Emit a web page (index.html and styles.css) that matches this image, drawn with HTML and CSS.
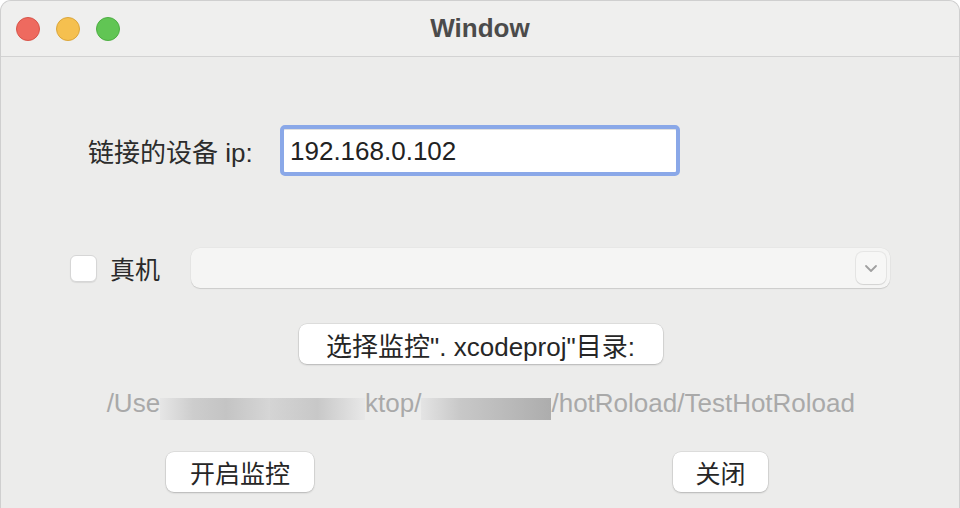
FILE: index.html
```html
<!DOCTYPE html>
<html lang="zh">
<head>
<meta charset="utf-8">
<title>Window</title>
<link rel="stylesheet" href="styles.css">
</head>
<body>
<div class="window">
  <div class="titlebar">
    <div class="lights">
      <span class="light red"></span>
      <span class="light yellow"></span>
      <span class="light green"></span>
    </div>
    <div class="title">Window</div>
  </div>
  <div class="content">
    <div class="row ip-row">
      <label class="label">链接的设备 ip:</label>
      <div class="field"><span class="field-text">192.168.0.102</span></div>
    </div>
    <div class="row device-row">
      <span class="checkbox"></span>
      <span class="check-label">真机</span>
      <div class="popup">
        <span class="popup-btn">
          <svg width="14" height="9" viewBox="0 0 14 9"><path d="M2 2 L7 7 L12 2" fill="none" stroke="#a0a0a0" stroke-width="1.8" stroke-linecap="round" stroke-linejoin="round"/></svg>
        </span>
      </div>
    </div>
    <div class="row center-row">
      <button class="btn choose">选择监控". xcodeproj"目录:</button>
    </div>
    <div class="row path-row">
      <span class="path">/Use<span class="blur b1"></span><span class="blur b2"></span>ktop/<span class="blur b3"></span>/hotRoload/TestHotRoload</span>
    </div>
    <div class="row bottom-row">
      <button class="btn start">开启监控</button>
      <button class="btn close">关闭</button>
    </div>
  </div>
</div>
</body>
</html>
```

FILE: styles.css
```css
* { box-sizing: border-box; }
html, body { margin: 0; padding: 0; background: #ffffff; }
body {
  width: 960px;
  height: 508px;
  overflow: hidden;
  font-family: "Liberation Sans", "Noto Sans CJK SC", sans-serif;
  color: #2a2a2a;
}
.window {
  width: 960px;
  height: 508px;
  background: #ececeb;
  border-radius: 11px 11px 0 0;
  border: 1px solid #cfcfcf;
  border-bottom: none;
  overflow: hidden;
  display: flex;
  flex-direction: column;
}
.titlebar {
  height: 56px;
  flex: none;
  background: #efefee;
  border-bottom: 1px solid #d3d3d3;
  display: flex;
  align-items: center;
  position: relative;
}
.lights {
  display: flex;
  gap: 16px;
  padding-left: 15px;
}
.light {
  width: 24px;
  height: 24px;
  border-radius: 50%;
  display: block;
}
.red { background: #ee6a5f; border: 1px solid #d85449; }
.yellow { background: #f5c04f; border: 1px solid #dba63a; }
.green { background: #61c554; border: 1px solid #4dae42; }
.title {
  position: absolute;
  left: 0;
  right: 0;
  top: 0;
  height: 55px;
  line-height: 55px;
  text-align: center;
  font-weight: bold;
  font-size: 26px;
  color: #4b4b4b;
}
.content {
  display: flex;
  flex-direction: column;
}
.row { display: flex; align-items: center; }
.ip-row {
  margin-top: 68px;
  height: 51px;
  padding-left: 87px;
}
.label {
  font-size: 26px;
  color: #2c2c2c;
  width: 192px;
  white-space: nowrap;
}
.field {
  width: 400px;
  height: 51px;
  border: 4px solid #8aa8e8;
  border-radius: 5px;
  background: #fff;
  display: flex;
  align-items: center;
  padding-left: 6px;
  box-shadow: inset 0 1px 0 #e0e0e0;
}
.field-text { font-size: 26px; color: #222; padding-top: 1px; }
.device-row {
  margin-top: 72px;
  height: 40px;
  padding-left: 69px;
}
.checkbox {
  width: 27px;
  height: 27px;
  border-radius: 6px;
  background: #fff;
  border: 1px solid #d6d6d6;
  box-shadow: 0 1px 1px rgba(0,0,0,0.08);
  display: block;
}
.check-label {
  font-size: 25px;
  margin-left: 13px;
  width: 81px;
  color: #2a2a2a;
}
.popup {
  width: 699px;
  height: 40px;
  background: #f5f5f4;
  border-radius: 9px;
  box-shadow: 0 1px 1px rgba(0,0,0,0.12), 0 0 0 0.5px rgba(0,0,0,0.04);
  display: flex;
  justify-content: flex-end;
  align-items: center;
  padding-right: 4px;
}
.popup-btn {
  width: 30px;
  height: 32px;
  border-radius: 7px;
  background: #f7f7f6;
  box-shadow: 0 0 0 1px rgba(0,0,0,0.06), 0 1px 1px rgba(0,0,0,0.08);
  display: flex;
  align-items: center;
  justify-content: center;
}
.btn {
  font-family: "Liberation Sans", "Noto Sans CJK SC", sans-serif;
  font-size: 25px;
  color: #262626;
  background: #fff;
  border: none;
  border-radius: 8px;
  height: 40px;
  padding: 0;
  white-space: nowrap;
  box-shadow: 0 0 0 0.5px rgba(0,0,0,0.12), 0 1px 2px rgba(0,0,0,0.18);
}
.center-row {
  margin-top: 36px;
  justify-content: center;
  padding-left: 1px;
}
.choose { width: 364px; font-size: 26px; }
.path-row {
  margin-top: 20px;
  height: 38px;
  justify-content: flex-end;
  padding-right: 104px;
}
.path {
  font-size: 26px;
  color: #a9a9a9;
  white-space: nowrap;
  display: flex;
  align-items: center;
}
.blur {
  display: inline-block;
  height: 22px;
  margin-top: 12px;
}
.b1 { width: 110px; background: linear-gradient(90deg, #e6e6e6, #cdcdcd 30%, #c4c4c4 60%, #d6d6d6); }
.b2 { width: 95px; background: linear-gradient(90deg, #d4d4d4, #c8c8c8 50%, #e8e8e8); }
.b3 { width: 130px; background: linear-gradient(90deg, #e4e4e4, #c8c8c8 30%, #adadad); }
.bottom-row {
  margin-top: 30px;
  padding-left: 165px;
}
.start { width: 148px; }
.close { width: 95px; margin-left: 359px; }
```
